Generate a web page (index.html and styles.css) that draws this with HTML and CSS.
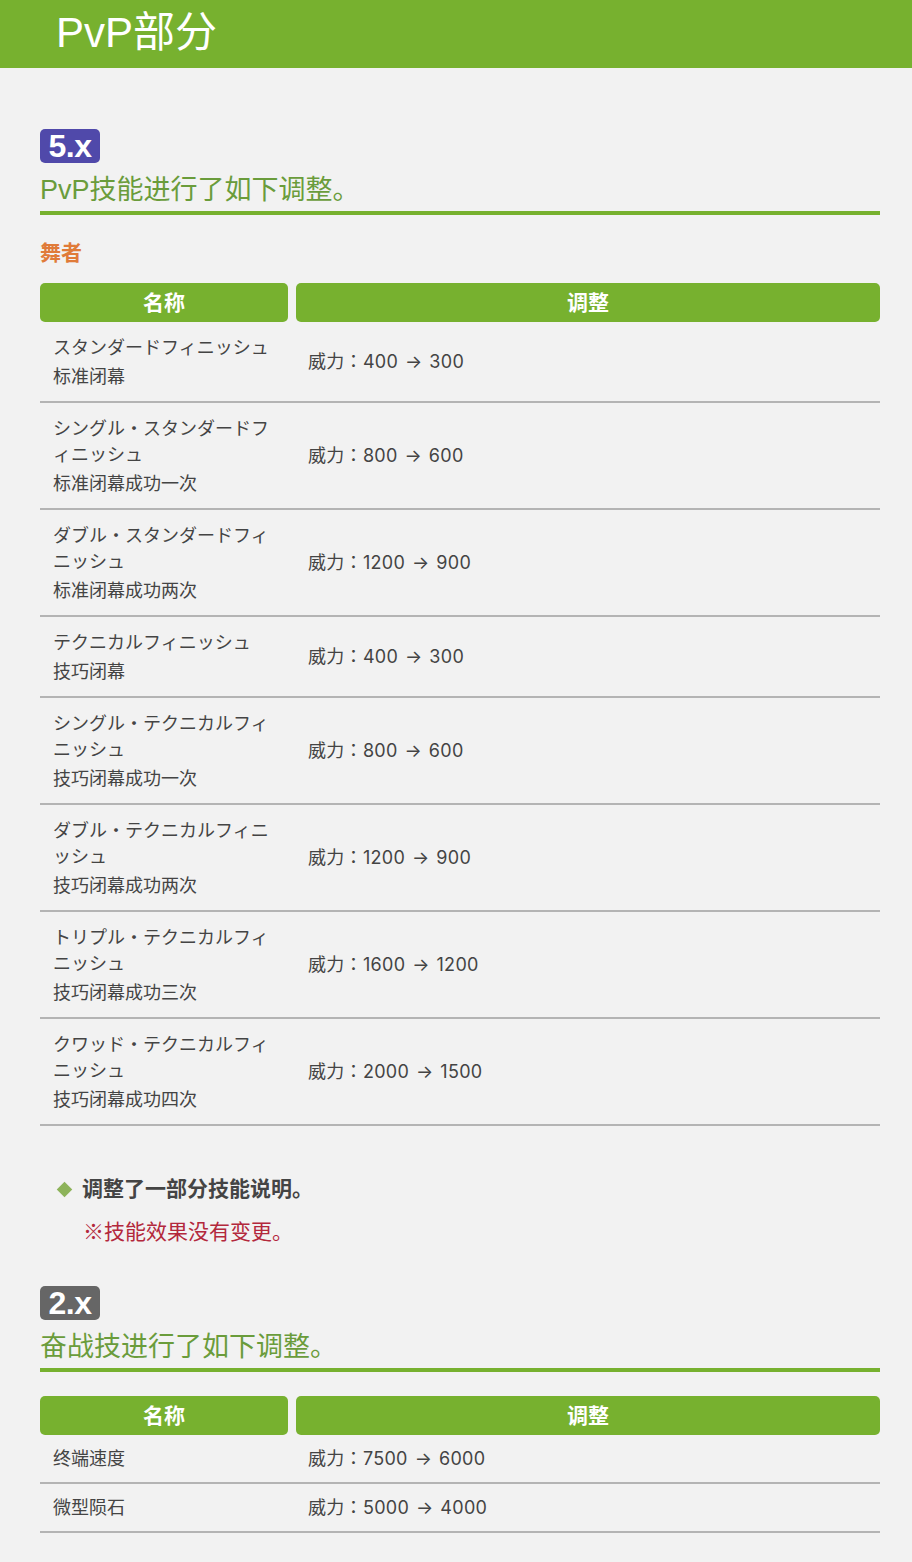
FILE: index.html
```html
<!DOCTYPE html>
<html lang="zh-CN">
<head>
<meta charset="utf-8">
<title>PvP部分</title>
<link rel="stylesheet" href="styles.css">
</head>
<body>
<header class="page-header"><h1 class="page-title">PvP部分</h1></header>
<main class="content">
  <section class="block">
    <div class="badge badge-purple">5.x</div>
    <h2 class="heading">PvP技能进行了如下调整。</h2>
    <h3 class="job">舞者</h3>
    <div class="table">
      <div class="row head"><div class="th">名称</div><div class="th">调整</div></div>
      <div class="row"><div class="name"><div class="kana">スタンダードフィニッシュ</div><div class="zh">标准闭幕</div></div><div class="val" lang="ja">威力：400 → 300</div></div>
      <div class="row"><div class="name"><div class="kana">シングル・スタンダードフィニッシュ</div><div class="zh">标准闭幕成功一次</div></div><div class="val" lang="ja">威力：800 → 600</div></div>
      <div class="row"><div class="name"><div class="kana">ダブル・スタンダードフィニッシュ</div><div class="zh">标准闭幕成功两次</div></div><div class="val" lang="ja">威力：1200 → 900</div></div>
      <div class="row"><div class="name"><div class="kana">テクニカルフィニッシュ</div><div class="zh">技巧闭幕</div></div><div class="val" lang="ja">威力：400 → 300</div></div>
      <div class="row"><div class="name"><div class="kana">シングル・テクニカルフィニッシュ</div><div class="zh">技巧闭幕成功一次</div></div><div class="val" lang="ja">威力：800 → 600</div></div>
      <div class="row"><div class="name"><div class="kana">ダブル・テクニカルフィニッシュ</div><div class="zh">技巧闭幕成功两次</div></div><div class="val" lang="ja">威力：1200 → 900</div></div>
      <div class="row"><div class="name"><div class="kana">トリプル・テクニカルフィニッシュ</div><div class="zh">技巧闭幕成功三次</div></div><div class="val" lang="ja">威力：1600 → 1200</div></div>
      <div class="row"><div class="name"><div class="kana">クワッド・テクニカルフィニッシュ</div><div class="zh">技巧闭幕成功四次</div></div><div class="val" lang="ja">威力：2000 → 1500</div></div>
    </div>
    <ul class="points"><li class="point">调整了一部分技能说明。</li></ul>
    <p class="note">※技能效果没有变更。</p>
  </section>
  <section class="block block-next">
    <div class="badge badge-gray">2.x</div>
    <h2 class="heading">奋战技进行了如下调整。</h2>
    <div class="table table-simple">
      <div class="row head"><div class="th">名称</div><div class="th">调整</div></div>
      <div class="row"><div class="name">终端速度</div><div class="val" lang="ja">威力：7500 → 6000</div></div>
      <div class="row"><div class="name">微型陨石</div><div class="val" lang="ja">威力：5000 → 4000</div></div>
    </div>
  </section>
</main>
</body>
</html>
```
FILE: styles.css
```css
html, body {
  margin: 0;
  padding: 0;
}
body {
  background: #f2f2f2;
  font-family: "Liberation Sans", "Noto Sans CJK SC", sans-serif;
  color: #444;
}
.page-header {
  background: #77b12f;
  height: 68px;
  padding-left: 56px;
  box-sizing: border-box;
  overflow: hidden;
}
.page-title {
  margin: 0;
  font-size: 42px;
  line-height: 66px;
  font-weight: 400;
  color: #fff;
}
.content {
  padding: 61px 32px 30px 40px;
}
.badge {
  width: 60px;
  height: 34px;
  border-radius: 5px;
  color: #fff;
  font-weight: 700;
  font-size: 32px;
  line-height: 35px;
  text-align: center;
  letter-spacing: -0.5px;
}
.badge-purple { background: #5049aa; }
.badge-gray { background: #666; }
.heading {
  margin: 9px 0 0;
  font-size: 27px;
  line-height: 36px;
  font-weight: 400;
  color: #6a9c3b;
  padding-bottom: 3px;
  border-bottom: 4px solid #77b12f;
}
.job {
  margin: 23px 0 15px;
  font-size: 21px;
  line-height: 30px;
  font-weight: 700;
  color: #e07b39;
}
.table {
  display: flex;
  flex-direction: column;
}
.row {
  display: grid;
  grid-template-columns: 248px 1fr;
  column-gap: 8px;
  align-items: center;
  border-bottom: 2px solid #b4b4b4;
}
.row.head {
  border-bottom: none;
}
.th {
  background: #77b12f;
  border-radius: 5px;
  color: #fff;
  font-weight: 700;
  font-size: 21px;
  line-height: 39px;
  text-align: center;
}
.name {
  padding: 13px 13px 11px;
  font-size: 18px;
  line-height: 26px;
  line-break: loose;
}
.zh {
  margin-top: 3px;
}
.val {
  padding: 0 12px;
  font-family: Inter, "Noto Sans CJK JP", sans-serif;
  font-size: 18px;
  line-height: 26px;
  letter-spacing: 0.3px;
  word-spacing: 1.5px;
}
.table-simple {
  margin-top: 24px;
}
.table-simple .name {
  padding: 11px 13px 10px;
}
.points {
  list-style: none;
  margin: 48px 0 0;
  padding: 0;
}
.point {
  display: flex;
  align-items: center;
  padding-left: 19px;
  font-size: 21px;
  line-height: 30px;
  font-weight: 700;
  color: #444;
}
.point::before {
  content: "";
  width: 11px;
  height: 11px;
  margin-right: 12px;
  background: #8db35a;
  transform: rotate(45deg);
}
.note {
  margin: 13px 0 0 43px;
  font-size: 21px;
  line-height: 30px;
  color: #b3283c;
}
.block-next {
  margin-top: 39px;
}
```
